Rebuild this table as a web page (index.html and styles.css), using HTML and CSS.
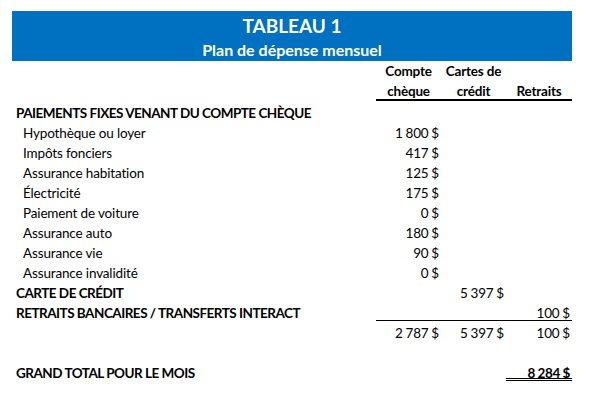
FILE: index.html
```html
<!DOCTYPE html>
<html lang="fr">

<head>
    <meta charset="UTF-8">
    <meta name="viewport" content="width=device-width, initial-scale=1.0">
    <title>Tableau 1 - Plan de dépense mensuel</title>
    <link rel="stylesheet" href="styles.css">
</head>

<body>
    <div class="sheet">
        <div class="banner">
            <div class="title">TABLEAU 1</div>
            <div class="subtitle">Plan de dépense mensuel</div>
        </div>

        <div class="row head">
            <div></div>
            <div class="col-title">Compte</div>
            <div class="col-title">Cartes de</div>
            <div></div>
        </div>
        <div class="row head">
            <div></div>
            <div class="col-title rule">chèque</div>
            <div class="col-title rule">crédit</div>
            <div class="col-title rule">Retraits</div>
        </div>

        <div class="row">
            <div class="label section">PAIEMENTS FIXES VENANT DU COMPTE CHÈQUE</div>
            <div></div><div></div><div></div>
        </div>
        <div class="row">
            <div class="label item">Hypothèque ou loyer</div>
            <div class="amount">1&nbsp;800&nbsp;$</div><div></div><div></div>
        </div>
        <div class="row">
            <div class="label item">Impôts fonciers</div>
            <div class="amount">417&nbsp;$</div><div></div><div></div>
        </div>
        <div class="row">
            <div class="label item">Assurance habitation</div>
            <div class="amount">125&nbsp;$</div><div></div><div></div>
        </div>
        <div class="row">
            <div class="label item">Électricité</div>
            <div class="amount">175&nbsp;$</div><div></div><div></div>
        </div>
        <div class="row">
            <div class="label item">Paiement de voiture</div>
            <div class="amount">0&nbsp;$</div><div></div><div></div>
        </div>
        <div class="row">
            <div class="label item">Assurance auto</div>
            <div class="amount">180&nbsp;$</div><div></div><div></div>
        </div>
        <div class="row">
            <div class="label item">Assurance vie</div>
            <div class="amount">90&nbsp;$</div><div></div><div></div>
        </div>
        <div class="row">
            <div class="label item">Assurance invalidité</div>
            <div class="amount">0&nbsp;$</div><div></div><div></div>
        </div>
        <div class="row">
            <div class="label section">CARTE DE CRÉDIT</div>
            <div></div><div class="amount">5&nbsp;397&nbsp;$</div><div></div>
        </div>
        <div class="row">
            <div class="label section">RETRAITS BANCAIRES / TRANSFERTS INTERACT</div>
            <div class="line"></div><div class="line"></div><div class="amount line">100&nbsp;$</div>
        </div>
        <div class="row">
            <div></div>
            <div class="amount">2&nbsp;787&nbsp;$</div>
            <div class="amount">5&nbsp;397&nbsp;$</div>
            <div class="amount">100&nbsp;$</div>
        </div>
        <div class="row blank"></div>
        <div class="row">
            <div class="label section">GRAND TOTAL POUR LE MOIS</div>
            <div></div><div></div>
            <div class="amount grand">8&nbsp;284&nbsp;$</div>
        </div>
    </div>
</body>

</html>
```

FILE: styles.css
```css
body {
    margin: 0;
    background-color: white;
    font-family: Lato, "Open Sans", sans-serif;
    font-size: 13.5px;
    letter-spacing: -0.15px;
    color: #000;
}

.sheet {
    width: 560px;
    margin: 11px 0 0 12px;
}

.banner {
    background-color: #0070c0;
    color: white;
    text-align: center;
    font-weight: bold;
    letter-spacing: 0;
}

.title {
    height: 28px;
    line-height: 30px;
    font-size: 19px;
}

.subtitle {
    height: 22px;
    line-height: 22px;
    font-size: 16px;
}

.row {
    display: grid;
    grid-template-columns: 364px 65px 65px 66px;
    height: 20px;
}

.row > div {
    box-sizing: border-box;
    height: 20px;
    padding-top: 2px;
    line-height: 20px;
    white-space: nowrap;
}

.row.head > div {
    padding-top: 0;
}

.col-title {
    text-align: center;
    font-weight: bold;
    letter-spacing: -0.2px;
}

.rule {
    border-bottom: 2px solid black;
}

.label.section {
    padding-left: 4px;
    font-weight: bold;
    letter-spacing: -0.5px;
}

.label.item {
    padding-left: 11px;
}

.amount {
    text-align: right;
    padding-right: 2px;
    word-spacing: -0.5px;
}

.line {
    border-bottom: 1px solid black;
}

.grand {
    font-weight: bold;
    border-bottom: 3px double black;
    padding-right: 2px;
    letter-spacing: -0.3px;
}
```
